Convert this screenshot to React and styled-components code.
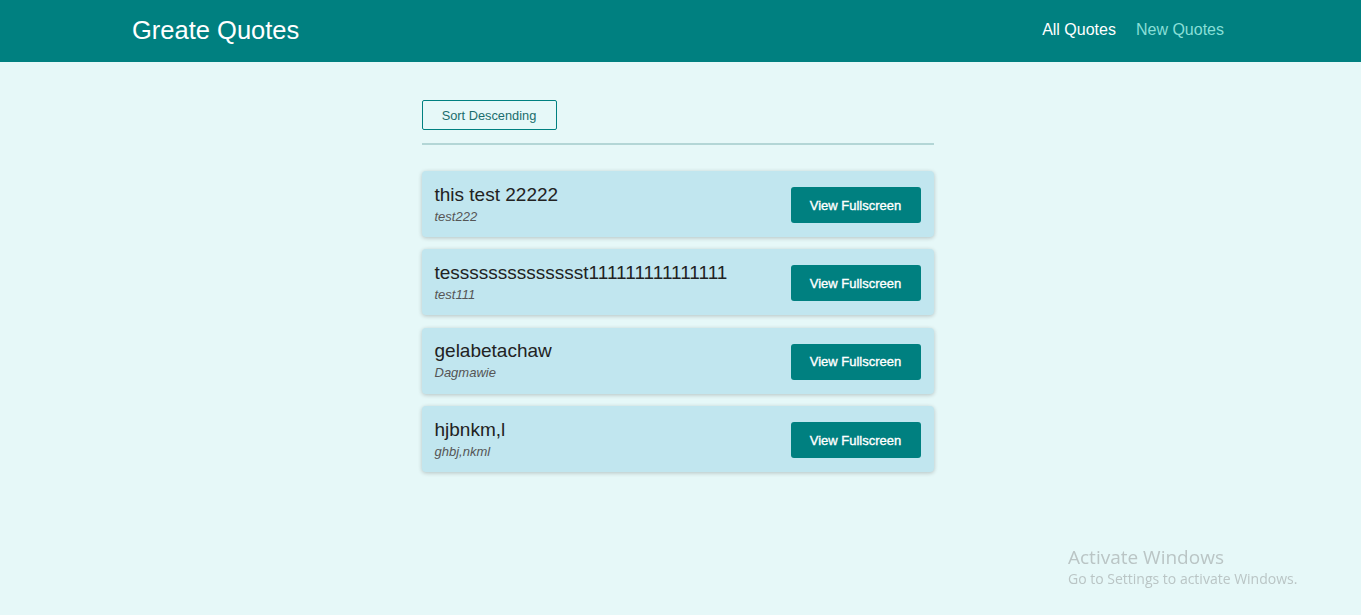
import React, { useState } from 'react';
import styled, { createGlobalStyle } from 'styled-components';

const Global = createGlobalStyle`
  * { box-sizing: border-box; }
  body {
    margin: 0;
    background: #e6f8f8;
    font-family: "Liberation Sans", Arial, sans-serif;
  }
`

const Header = styled.header`
  height: 62px;
  background: #008080;
  display: flex;
  align-items: center;
  justify-content: space-between;
  padding: 0 137px 0 132px;
`

const Logo = styled.div`
  color: #fff;
  font-size: 25.5px;
  padding-bottom: 1px;
`

const Nav = styled.nav`
  display: flex;
  gap: 20px;
  padding-bottom: 3px;
`

const NavLink = styled.a`
  font-size: 16px;
  color: ${p => (p.active ? '#ffffff' : '#88dfd7')};
  text-decoration: none;
  cursor: pointer;
`

const Main = styled.main`
  width: 512px;
  margin: 38px 0 0 calc(50% - 259px);
  padding-bottom: 40px;
`

const SortBar = styled.div`
  padding-bottom: 13px;
  border-bottom: 2px solid #b3d6d6;
`

const SortButton = styled.button`
  height: 30px;
  width: 135px;
  padding: 0;
  background: transparent;
  border: 1px solid #008080;
  border-radius: 2px;
  color: #1a6d6d;
  font-family: "Liberation Sans", Arial, sans-serif;
  font-size: 12.8px;
  cursor: pointer;
`

const List = styled.ul`
  list-style: none;
  margin: 26px 0 0;
  padding: 0;
  display: flex;
  flex-direction: column;
  gap: 12.4px;
`

const Card = styled.li`
  height: 66px;
  background: #c1e6ef;
  border-radius: 4px;
  box-shadow: 0 1px 4px rgba(0, 0, 0, 0.22);
  display: flex;
  align-items: center;
  justify-content: space-between;
  padding: 0 13px;
`

const Quote = styled.div`
  display: flex;
  flex-direction: column;
  gap: 3px;
  margin-top: -1px;
`

const Text = styled.p`
  margin: 0;
  font-size: 19px;
  color: #222;
`

const Author = styled.p`
  margin: 0;
  font-size: 13px;
  font-style: italic;
  color: #555;
`

const ViewButton = styled.a`
  width: 130px;
  height: 36px;
  background: #008080;
  border-radius: 3px;
  color: #fff;
  font-size: 13px;
  -webkit-text-stroke: 0.35px #fff;
  display: flex;
  align-items: center;
  justify-content: center;
  margin-top: 2px;
  cursor: pointer;
`

const Watermark = styled.div`
  position: fixed;
  left: 1068px;
  top: 546px;
  font-family: "Open Sans", "Noto Sans", sans-serif;
  color: #bac5c5;
  line-height: 1.2;
`

const WmTitle = styled.div`
  font-size: 19px;
`

const WmSub = styled.div`
  font-size: 14px;
  margin-top: 2px;
`

const quotes = [
  { id: 'q1', text: 'this test 22222', author: 'test222' },
  { id: 'q2', text: 'te' + 's'.repeat(14) + 't' + '1'.repeat(15), author: 'test111' },
  { id: 'q3', text: 'gelabetachaw', author: 'Dagmawie' },
  { id: 'q4', text: 'hjbnkm,l', author: 'ghbj,nkml' },
];

function App() {
  const [desc, setDesc] = useState(false)

  return (
    <>
      <Global />
      <Header>
        <Logo>Greate Quotes</Logo>
        <Nav>
          <NavLink active>All Quotes</NavLink>
          <NavLink>New Quotes</NavLink>
        </Nav>
      </Header>
      <Main>
        <SortBar>
          <SortButton onClick={() => setDesc(!desc)}>
            {desc ? 'Sort Ascending' : 'Sort Descending'}
          </SortButton>
        </SortBar>
        <List>
          {quotes.map(q => (
            <Card key={q.id}>
              <Quote>
                <Text>{q.text}</Text>
                <Author>{q.author}</Author>
              </Quote>
              <ViewButton>View Fullscreen</ViewButton>
            </Card>
          ))}
        </List>
      </Main>
      <Watermark>
        <WmTitle>Activate Windows</WmTitle>
        <WmSub>Go to Settings to activate Windows.</WmSub>
      </Watermark>
    </>
  );
}

export default App;
